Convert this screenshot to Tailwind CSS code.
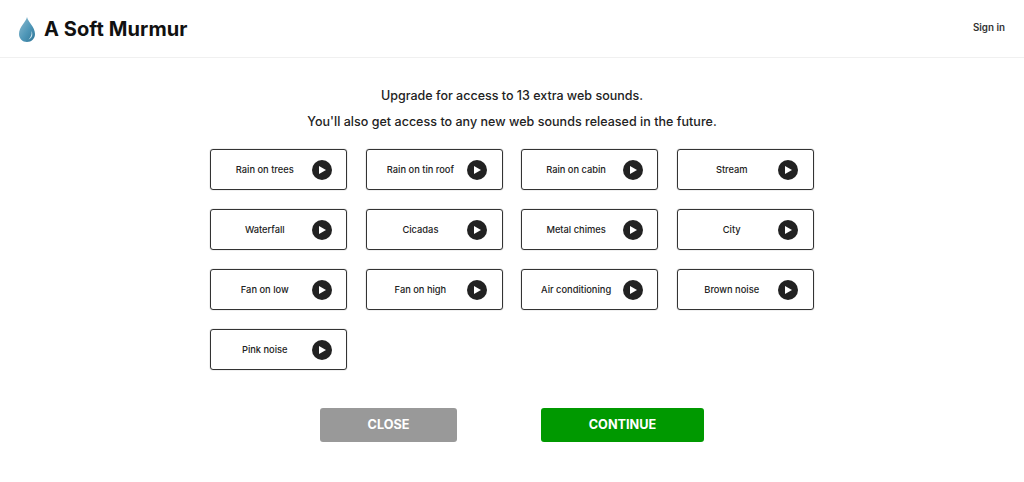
<!DOCTYPE html>
<html lang="en">
<head>
    <meta charset="utf-8"/>
    <meta content="width=device-width, initial-scale=1.0" name="viewport"/>
    <title>A Soft Murmur</title>
    <script src="https://cdn.jsdelivr.net/npm/@tailwindcss/browser@4"></script>
</head>
<body class="bg-white text-[#222] font-['Inter',sans-serif] h-[482px] overflow-hidden">
    <header class="h-[58px] border-b border-[#f0f0f0] flex items-center justify-between pl-[19px] pr-[19px]">
        <div class="flex items-center gap-[9px]">
            <svg width="16" height="25" viewBox="0 0 16 25" class="mt-[1px]">
                <defs>
                    <linearGradient id="drop" x1="0" y1="0" x2="1" y2="1">
                        <stop offset="0" stop-color="#8fbcd0"/>
                        <stop offset="0.55" stop-color="#4f97b8"/>
                        <stop offset="1" stop-color="#2f7596"/>
                    </linearGradient>
                </defs>
                <path d="M8 0C9 5 16 10 16 17C16 21.500 12.500 25 8 25C3.500 25 0 21.500 0 17C0 10 7 5 8 0Z" fill="url(#drop)"/>
                <path d="M12.500 14C14.500 18 12.500 21.500 9.500 22.500C11.500 20.500 13 18 12.500 14Z" fill="#cfe6ef"/>
            </svg>
            <span class="text-[20px] font-bold text-[#111] tracking-[0.08px]">A Soft Murmur</span>
        </div>
        <a class="text-[9.800px] font-semibold text-[#333]">Sign in</a>
    </header>
    <main class="flex flex-col items-center">
        <p class="mt-[30px] text-[12.500px] leading-[16px] font-medium">Upgrade for access to 13 extra web sounds.</p>
        <p class="mt-[10px] text-[12.500px] leading-[16px] font-medium tracking-[0.03px]">You'll also get access to any new web sounds released in the future.</p>
        <div class="mt-[19px] grid grid-cols-[repeat(4,137px)] auto-rows-[41px] gap-y-[19px] gap-x-[18.670px]">
            <div class="flex items-center border border-[#333] shadow-[0_0_1px_rgba(0,0,0,0.6)] rounded-[3px] pl-[7px] pr-[14.500px]"><span class="flex-1 text-center text-[9.300px] font-medium whitespace-nowrap">Rain on trees</span><span class="w-5 h-5 rounded-full bg-[#222] flex items-center justify-center"><svg width="8" height="8" viewBox="0 0 8 8"><path d="M1 0L8 4L1 8Z" fill="#fff"/></svg></span></div>
            <div class="flex items-center border border-[#333] shadow-[0_0_1px_rgba(0,0,0,0.6)] rounded-[3px] pl-[7px] pr-[14.500px]"><span class="flex-1 text-center text-[9.300px] font-medium whitespace-nowrap">Rain on tin roof</span><span class="w-5 h-5 rounded-full bg-[#222] flex items-center justify-center"><svg width="8" height="8" viewBox="0 0 8 8"><path d="M1 0L8 4L1 8Z" fill="#fff"/></svg></span></div>
            <div class="flex items-center border border-[#333] shadow-[0_0_1px_rgba(0,0,0,0.6)] rounded-[3px] pl-[7px] pr-[14.500px]"><span class="flex-1 text-center text-[9.300px] font-medium whitespace-nowrap">Rain on cabin</span><span class="w-5 h-5 rounded-full bg-[#222] flex items-center justify-center"><svg width="8" height="8" viewBox="0 0 8 8"><path d="M1 0L8 4L1 8Z" fill="#fff"/></svg></span></div>
            <div class="flex items-center border border-[#333] shadow-[0_0_1px_rgba(0,0,0,0.6)] rounded-[3px] pl-[7px] pr-[14.500px]"><span class="flex-1 text-center text-[9.300px] font-medium whitespace-nowrap">Stream</span><span class="w-5 h-5 rounded-full bg-[#222] flex items-center justify-center"><svg width="8" height="8" viewBox="0 0 8 8"><path d="M1 0L8 4L1 8Z" fill="#fff"/></svg></span></div>
            <div class="flex items-center border border-[#333] shadow-[0_0_1px_rgba(0,0,0,0.6)] rounded-[3px] pl-[7px] pr-[14.500px]"><span class="flex-1 text-center text-[9.300px] font-medium whitespace-nowrap">Waterfall</span><span class="w-5 h-5 rounded-full bg-[#222] flex items-center justify-center"><svg width="8" height="8" viewBox="0 0 8 8"><path d="M1 0L8 4L1 8Z" fill="#fff"/></svg></span></div>
            <div class="flex items-center border border-[#333] shadow-[0_0_1px_rgba(0,0,0,0.6)] rounded-[3px] pl-[7px] pr-[14.500px]"><span class="flex-1 text-center text-[9.300px] font-medium whitespace-nowrap">Cicadas</span><span class="w-5 h-5 rounded-full bg-[#222] flex items-center justify-center"><svg width="8" height="8" viewBox="0 0 8 8"><path d="M1 0L8 4L1 8Z" fill="#fff"/></svg></span></div>
            <div class="flex items-center border border-[#333] shadow-[0_0_1px_rgba(0,0,0,0.6)] rounded-[3px] pl-[7px] pr-[14.500px]"><span class="flex-1 text-center text-[9.300px] font-medium whitespace-nowrap">Metal chimes</span><span class="w-5 h-5 rounded-full bg-[#222] flex items-center justify-center"><svg width="8" height="8" viewBox="0 0 8 8"><path d="M1 0L8 4L1 8Z" fill="#fff"/></svg></span></div>
            <div class="flex items-center border border-[#333] shadow-[0_0_1px_rgba(0,0,0,0.6)] rounded-[3px] pl-[7px] pr-[14.500px]"><span class="flex-1 text-center text-[9.300px] font-medium whitespace-nowrap">City</span><span class="w-5 h-5 rounded-full bg-[#222] flex items-center justify-center"><svg width="8" height="8" viewBox="0 0 8 8"><path d="M1 0L8 4L1 8Z" fill="#fff"/></svg></span></div>
            <div class="flex items-center border border-[#333] shadow-[0_0_1px_rgba(0,0,0,0.6)] rounded-[3px] pl-[7px] pr-[14.500px]"><span class="flex-1 text-center text-[9.300px] font-medium whitespace-nowrap">Fan on low</span><span class="w-5 h-5 rounded-full bg-[#222] flex items-center justify-center"><svg width="8" height="8" viewBox="0 0 8 8"><path d="M1 0L8 4L1 8Z" fill="#fff"/></svg></span></div>
            <div class="flex items-center border border-[#333] shadow-[0_0_1px_rgba(0,0,0,0.6)] rounded-[3px] pl-[7px] pr-[14.500px]"><span class="flex-1 text-center text-[9.300px] font-medium whitespace-nowrap">Fan on high</span><span class="w-5 h-5 rounded-full bg-[#222] flex items-center justify-center"><svg width="8" height="8" viewBox="0 0 8 8"><path d="M1 0L8 4L1 8Z" fill="#fff"/></svg></span></div>
            <div class="flex items-center border border-[#333] shadow-[0_0_1px_rgba(0,0,0,0.6)] rounded-[3px] pl-[7px] pr-[14.500px]"><span class="flex-1 text-center text-[9.300px] font-medium whitespace-nowrap">Air conditioning</span><span class="w-5 h-5 rounded-full bg-[#222] flex items-center justify-center"><svg width="8" height="8" viewBox="0 0 8 8"><path d="M1 0L8 4L1 8Z" fill="#fff"/></svg></span></div>
            <div class="flex items-center border border-[#333] shadow-[0_0_1px_rgba(0,0,0,0.6)] rounded-[3px] pl-[7px] pr-[14.500px]"><span class="flex-1 text-center text-[9.300px] font-medium whitespace-nowrap">Brown noise</span><span class="w-5 h-5 rounded-full bg-[#222] flex items-center justify-center"><svg width="8" height="8" viewBox="0 0 8 8"><path d="M1 0L8 4L1 8Z" fill="#fff"/></svg></span></div>
            <div class="flex items-center border border-[#333] shadow-[0_0_1px_rgba(0,0,0,0.6)] rounded-[3px] pl-[7px] pr-[14.500px]"><span class="flex-1 text-center text-[9.300px] font-medium whitespace-nowrap">Pink noise</span><span class="w-5 h-5 rounded-full bg-[#222] flex items-center justify-center"><svg width="8" height="8" viewBox="0 0 8 8"><path d="M1 0L8 4L1 8Z" fill="#fff"/></svg></span></div>
        </div>
        <div class="mt-[38px] flex gap-[84px]">
            <button class="w-[137px] h-[34px] rounded-[3px] bg-[#999999] text-white text-[12.700px] font-bold">CLOSE</button>
            <button class="w-[163px] h-[34px] rounded-[3px] bg-[#009900] text-white text-[12.700px] font-bold">CONTINUE</button>
        </div>
    </main>
</body>
</html>
